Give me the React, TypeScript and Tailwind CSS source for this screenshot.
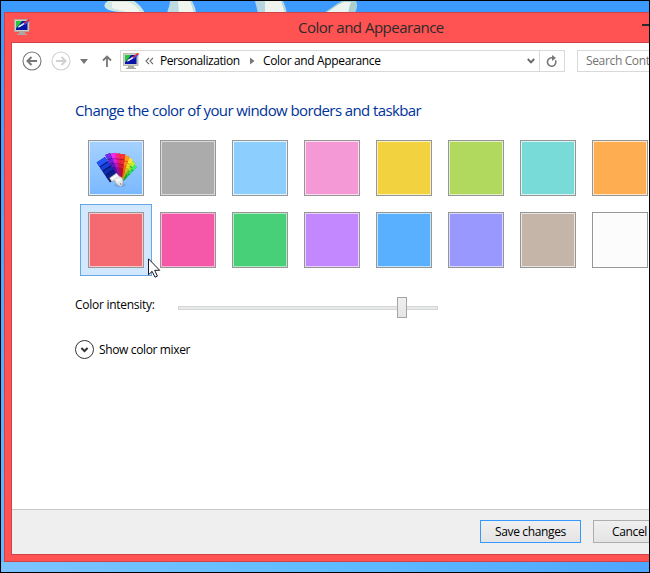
import React, { useState } from "react";

const swatchRows = [
  [
    { name: "Automatic", color: "bg-linear-to-b from-[#a5d1ff] to-[#7ab9ff]", ring: "border-[#dceeff]", auto: true },
    { name: "Gray", color: "bg-[#ababab]", ring: "border-[#dadada]" },
    { name: "Sky", color: "bg-[#8ccfff]", ring: "border-[#e4f4ff]" },
    { name: "Pink", color: "bg-[#f499d5]", ring: "border-[#fbdcf0]" },
    { name: "Yellow", color: "bg-[#f2d33f]", ring: "border-[#faf0be]" },
    { name: "Lime", color: "bg-[#b0d95e]", ring: "border-[#e2f1c5]" },
    { name: "Turquoise", color: "bg-[#78dbd7]", ring: "border-[#d9f5f3]" },
    { name: "Orange", color: "bg-[#ffad51]", ring: "border-[#ffe6cb]" },
  ],
  [
    { name: "Red", color: "bg-[#f56a70]", ring: "border-[#f9c9cd]" },
    { name: "Fuchsia", color: "bg-[#f558a8]", ring: "border-[#f9b4d8]" },
    { name: "Green", color: "bg-[#48d078]", ring: "border-[#b0eac5]" },
    { name: "Violet", color: "bg-[#c387ff]", ring: "border-[#e7d1ff]" },
    { name: "Blue", color: "bg-[#58b0ff]", ring: "border-[#c4e3ff]" },
    { name: "Lavender", color: "bg-[#9998ff]", ring: "border-[#d9d8ff]" },
    { name: "Taupe", color: "bg-[#c4b5a8]", ring: "border-[#ebe5e0]" },
    { name: "White", color: "bg-[#fcfcfc]", ring: "border-white" },
  ],
];

function MonitorIcon() {
  return (
    <svg width="17" height="17" viewBox="0 0 17 17" className="shrink-0">
      <path d="M5 13h6v1.5l2 .5v1H3v-1l2-.5z" fill="#aaa9a1" />
      <rect x="0.5" y="0.5" width="14.5" height="12" fill="#d1d0c5" stroke="#aaa9a1" strokeWidth=".7" />
      <rect x="2" y="2" width="11.5" height="9" fill="#0714a8" />
      <path d="M2 2h6L5.5 5.5 4 7 3 8.5 2 9z" fill="#27c641" />
      <path d="M3.8 8.6c1.2-2.2 2-3 3.7-2.8C7.5 7.6 5.8 8.6 3.8 8.6z" fill="#fff" />
      <path d="M7 6.7l3-2.4" stroke="#e9edff" strokeWidth="1.6" />
      <path d="M10 4.5L15.5 .5" stroke="#e4273c" strokeWidth="1.8" />
      <path d="M10.5 5.6l4-3.4" stroke="#3158ef" strokeWidth="1.2" />
    </svg>
  );
}

function SwatchFanIcon() {
  const blades = [
    { angle: 40, top: 7, light: "#35f17d", dark: "#109c38" },
    { angle: 32, top: 5, light: "#b6f52d", dark: "#32a421" },
    { angle: 23, top: 3.5, light: "#ffe632", dark: "#bbb515" },
    { angle: 14, top: 2, light: "#ffa019", dark: "#e45b13" },
    { angle: 5, top: 1, light: "#ff382f", dark: "#bb1020" },
    { angle: -5, top: 0.5, light: "#fb2676", dark: "#ad0b58" },
    { angle: -14, top: -0.5, light: "#f32be4", dark: "#a50baa" },
    { angle: -23, top: -1.5, light: "#762bec", dark: "#4412a7" },
  ];
  return (
    <svg width="42" height="38" viewBox="0 0 42 38" className="mt-1">
      <ellipse cx="25" cy="34" rx="6" ry="2" fill="#3b6ea5" opacity=".25" />
      {blades.map((b) => (
        <g key={b.angle} transform={`rotate(${b.angle} 25 32) translate(0 ${b.top})`}>
          <path d={`M22.3 2h5.4l-1.2 ${26 - b.top}h-3z`} fill={b.dark} />
          <path d="M22.3 2h5.4l-.2 5h-5z" fill={b.light} />
          <path d="M22.5 8h5l-.2 4h-4.6z" fill={b.light} opacity=".75" />
          <path d="M22.7 13h4.6l-.2 3h-4.2z" fill={b.light} opacity=".4" />
        </g>
      ))}
      <g transform="rotate(-34 25 32)">
        <path d="M17 2h10v24H17z" fill="#061069" />
        <path d="M17 2h10v5H17z" fill="#2354f6" />
        <path d="M17 8h10v4H17z" fill="#173fd7" />
        <path d="M17 13h10v4H17z" fill="#0d2cad" />
        <path d="M17 18h10v4H17z" fill="#0a1d89" />
      </g>
      <path d="M14.5 27l7-5 2.5 3 3.5 2c1 3.500 .5 7-1.500 8.500-3-.5-5.500-3-6.500-6l-3 1z" fill="#e7e7e7" stroke="#969696" strokeWidth=".5" />
      <path d="M16.500 28l6-4M21.500 29.500l4-1" stroke="#fff" strokeWidth="1.5" />
      <circle cx="25.500" cy="33" r=".8" fill="#777" />
    </svg>
  );
}

function CircleArrow({ className, flip }: { className: string; flip?: boolean }) {
  return (
    <svg width="20" height="20" viewBox="0 0 20 20" fill="none" stroke="currentColor" className={className}>
      <circle cx="10" cy="10" r="9" strokeWidth="1.1" />
      <path d={flip ? "M5 10h9M10.5 6l4 4-4 4" : "M15 10H6M9.5 6l-4 4 4 4"} strokeWidth="2" />
    </svg>
  );
}

function DesktopFlowers() {
  return (
    <svg width="648" height="12" viewBox="0 0 648 12" className="absolute left-0 top-0 blur-[0.6px]">
      <path d="M107 0h26c5 3 8 7 11 12h-22c-4-2-12-1-16-4-4-2-3-6 1-8z" fill="#cfe8e4" />
      <path d="M111 1h16c6 2 9 5 12 10h-14c-5-3-12-2-14-5z" fill="#f1f6ee" />
      <path d="M169 0h22c2 4 4 8 4 12h-29c1-4 3-8 3-12z" fill="#bcdce2" />
      <path d="M177 0h12l4 12h-15z" fill="#f0f5ee" />
      <path d="M254 0h28c2 4 3 8 4 12h-29z" fill="#b5d5e0" />
      <path d="M264 0h16l4 12h-20z" fill="#eef4ed" />
      <path d="M323 12c6-4 12-9 18-12h14c2 4 1 8-1 12z" fill="#a9cfcf" />
      <path d="M325 12c6-4 12-9 18-11h7c-2 5-2 8-3 11z" fill="#ecf4ef" />
    </svg>
  );
}

function AddressBar() {
  return (
    <div className="flex h-[22px] w-[445px] shrink-0 border border-[#d9d9d9] text-black">
      <div className="flex min-w-0 flex-1 items-center pl-0.5">
        <MonitorIcon />
        <svg width="9" height="8" viewBox="0 0 9 8" fill="none" stroke="#666" className="ml-[5px]">
          <path d="M4 .8L1 4l3 3.2M8 .8L5 4l3 3.2" strokeWidth="1.1" />
        </svg>
        <span className="ml-[6px] w-[80px] whitespace-nowrap text-[12px] tracking-[-0.43px]">Personalization</span>
        <svg width="5" height="8" viewBox="0 0 5 8" className="ml-[10px]">
          <path d="M0 .5L4.5 4 0 7.5z" fill="#777" />
        </svg>
        <span className="ml-[8px] whitespace-nowrap text-[12px] tracking-[-0.35px]">Color and Appearance</span>
        <svg width="8" height="6" viewBox="0 0 8 6" fill="none" stroke="#666" className="ml-auto mr-[4px]">
          <path d="M.8 1L4 4.3 7.2 1" strokeWidth="1.9" />
        </svg>
      </div>
      <div className="flex w-[25px] items-center justify-center border-l border-[#d9d9d9]">
        <svg width="12" height="13" viewBox="0 0 12 13" fill="none" stroke="#777">
          <path d="M7.5 2.8H5.2a4.2 4.2 0 1 0 4.3 2.5" strokeWidth="1.6" />
          <path d="M6 0v6l4-3z" fill="#777" stroke="none" />
        </svg>
      </div>
    </div>
  );
}

function NavBar() {
  return (
    <div className="flex h-9 shrink-0 items-center pl-[10px]">
      <CircleArrow className="shrink-0 text-[#777]" />
      <CircleArrow className="ml-[9px] shrink-0 text-[#d0d0d0]" flip />
      <svg width="8" height="5" viewBox="0 0 8 5" className="ml-[9px] shrink-0">
        <path d="M0 0h8L4 5z" fill="#777" />
      </svg>
      <svg width="10" height="12" viewBox="0 0 10 12" fill="none" stroke="#777" className="ml-[14px] mr-[8px] shrink-0">
        <path d="M5 12V1.5M1 5.5l4-4 4 4" strokeWidth="1.8" />
      </svg>
      <AddressBar />
      <div className="ml-3 flex h-[22px] w-[130px] shrink-0 items-center whitespace-nowrap border border-[#d9d9d9] pl-[8px] text-[12px] tracking-[-0.35px] text-[#737373]">
        Search Cont
      </div>
    </div>
  );
}

export default function App() {
  const [selected, setSelected] = useState("Red");

  return (
    <div className="relative h-[573px] w-[650px] overflow-hidden border border-black bg-linear-to-b from-[#3b99ff] to-[#66b9ff] pl-[3px] pt-[11px] font-['Open_Sans',sans-serif]">
      <DesktopFlowers />
      <div className="absolute inset-x-0 bottom-0 h-[10px] bg-linear-to-r from-[#7cc4ff] via-[#5fbcff] to-[#4fa5ff]" />
      <div className="relative flex h-[550px] w-[720px] flex-col border border-[#cf4248] bg-[#ff5252] pb-[6px] pl-[6px]">
        {/* Title bar */}
        <div className="flex h-[29px] shrink-0 items-center pl-[3px]">
          <MonitorIcon />
          <h1 className="ml-[267px] w-[147px] whitespace-nowrap text-[15px] tracking-[-0.5px] text-[#2b2b2b]">
            Color and Appearance
          </h1>
          <div className="ml-[197px] mt-[-5px] h-[2px] w-[10px] shrink-0 bg-[#2b2b2b]" />
        </div>

        <div className="flex flex-1 flex-col border border-[#cf4248] bg-white">
          <NavBar />

          <main className="flex-1 pl-[63px] pt-[20px]">
            <h2 className="h-[33px] whitespace-nowrap text-[15px] leading-[22px] tracking-[-0.6px] text-[#003399]">
              Change the color of your window borders and taskbar
            </h2>

            <div className="ml-[5px] flex flex-col">
              {swatchRows.map((row, i) => (
                <div key={i} className="flex">
                  {row.map((s) => (
                    <button
                      key={s.name}
                      aria-label={s.name}
                      onClick={() => setSelected(s.name)}
                      className={`size-[72px] shrink-0 border p-[7px] ${
                        selected === s.name ? "border-[#66a7e8] bg-[#d1e8ff]" : "border-transparent"
                      }`}
                    >
                      <span className="block size-[56px] border border-[#969696]">
                        <span className={`flex size-[54px] items-center justify-center border ${s.ring} ${s.color}`}>
                          {"auto" in s && <SwatchFanIcon />}
                        </span>
                      </span>
                    </button>
                  ))}
                </div>
              ))}
            </div>

            {/* Intensity slider */}
            <div className="mt-[20px] flex h-[24px] items-center text-[12px] text-black">
              <span className="mt-[-6px] w-[103px] whitespace-nowrap tracking-[-0.27px]">Color intensity:</span>
              <div className="relative h-[4px] w-[260px] border border-[#d6d6d6] bg-[#e7eaea]">
                <div className="absolute left-[218px] top-[-10px] h-[21px] w-[10px] border border-[#a5a5a5] bg-linear-to-b from-[#f0f0f0] to-[#e5e5e5]" />
              </div>
            </div>

            <button className="mt-[20px] flex h-[19px] items-center gap-[5px] text-[12px] tracking-[-0.36px] text-black">
              <svg width="19" height="19" viewBox="0 0 19 19" fill="none" stroke="#333">
                <circle cx="9.5" cy="9.5" r="9" strokeWidth="1" />
                <path d="M6.4 8l3.1 3 3.1-3" strokeWidth="2" />
              </svg>
              Show color mixer
            </button>
          </main>

          <footer className="flex h-[45px] shrink-0 items-start gap-3 border-t border-[#c9c9c9] bg-[#efefef] pl-[468px] pt-[10px] text-[12px] text-black">
            <button className="h-[23px] w-[101px] shrink-0 border border-[#3399ff] bg-linear-to-b from-[#f0f0f0] to-[#e4e4e4] tracking-[-0.35px]">
              Save changes
            </button>
            <button className="h-[23px] w-[73px] shrink-0 border border-[#adadad] bg-linear-to-b from-[#f0f0f0] to-[#e4e4e4] tracking-[-0.35px]">
              Cancel
            </button>
          </footer>
        </div>
      </div>

      {/* Mouse pointer */}
      <svg width="13" height="20" viewBox="0 0 13 20" className="absolute left-[147px] top-[257px]">
        <path d="M.5.8v16l3.6-3.5L7 19.2l2.4-1.1-2.7-5.8h5z" fill="#fff" stroke="#171724" strokeWidth="1" />
      </svg>
    </div>
  );
}
